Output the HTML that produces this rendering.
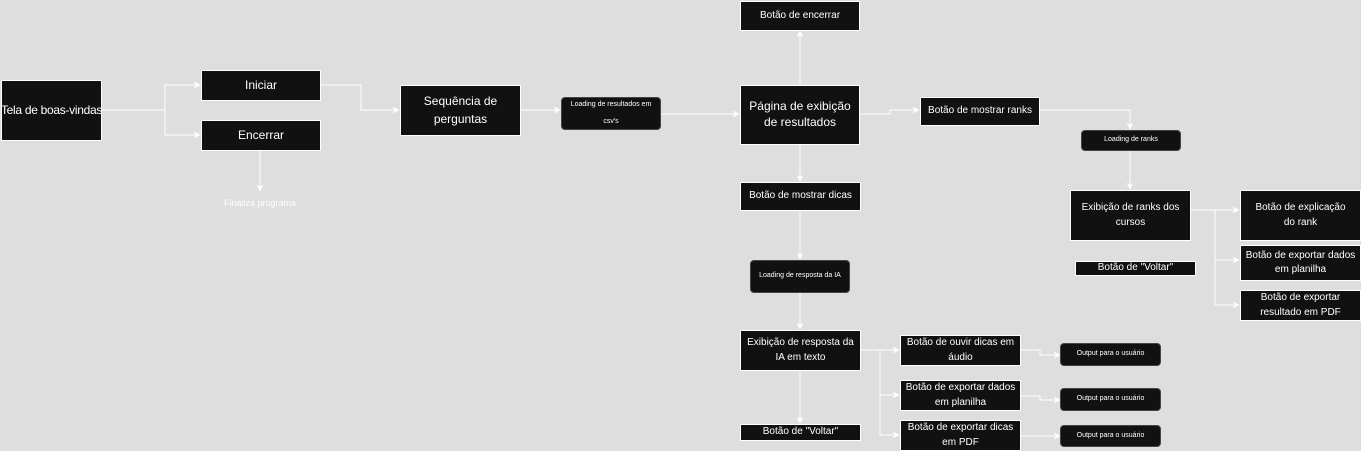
<!DOCTYPE html>
<html><head><meta charset="utf-8"><style>
body{margin:0;width:1361px;height:451px;background:#dedede;position:relative;overflow:hidden;font-family:"Liberation Sans",sans-serif}
.b{position:absolute;background:#111;border:1px solid #fff;box-sizing:border-box;color:#fff;display:flex;align-items:center;justify-content:center;text-align:center;font-size:10px;line-height:1.45}
.r{border-radius:4px;font-size:7px;border-color:#444}
svg{position:absolute;left:0;top:0}
</style></head><body>
<svg width="1361" height="451" fill="none" stroke="#fff" stroke-width="1">
<defs><marker id="a" viewBox="0 0 10 10" refX="9" refY="5" markerWidth="7" markerHeight="7" orient="auto"><path d="M0 0L10 5L0 10L3 5z" fill="#fff" stroke="none"/></marker></defs>
<path d="M101 110H165V85H200" marker-end="url(#a)"/>
<path d="M165 110V135H200" marker-end="url(#a)"/>
<path d="M260 150V191" marker-end="url(#a)"/>
<path d="M320 85H361V110H399" marker-end="url(#a)"/>
<path d="M520 110H560" marker-end="url(#a)"/>
<path d="M661 114H739" marker-end="url(#a)"/>
<path d="M800 85V31" marker-end="url(#a)"/>
<path d="M860 114H890V110H919" marker-end="url(#a)"/>
<path d="M1040 110H1130V129" marker-end="url(#a)"/>
<path d="M1130 151V189" marker-end="url(#a)"/>
<path d="M1190 210H1239" marker-end="url(#a)"/>
<path d="M1215 210V260H1239" marker-end="url(#a)"/>
<path d="M1215 260V305H1239" marker-end="url(#a)"/>
<path d="M800 145V181" marker-end="url(#a)"/>
<path d="M800 210V259" marker-end="url(#a)"/>
<path d="M800 293V329" marker-end="url(#a)"/>
<path d="M800 370V423" marker-end="url(#a)"/>
<path d="M860 350H899" marker-end="url(#a)"/>
<path d="M880 350V395H899" marker-end="url(#a)"/>
<path d="M880 395V435H899" marker-end="url(#a)"/>
<path d="M1020 350H1040V355H1060" marker-end="url(#a)"/>
<path d="M1020 396H1040V400H1060" marker-end="url(#a)"/>
<path d="M1020 436H1060" marker-end="url(#a)"/>
</svg>
<div class="b" style="left:1px;top:80px;width:101px;height:61px;font-size:12px;white-space:nowrap;letter-spacing:-0.3px">Tela de boas-vindas</div>
<div class="b" style="left:201px;top:70px;width:120px;height:31px;font-size:12px">Iniciar</div>
<div class="b" style="left:201px;top:120px;width:120px;height:31px;font-size:12px">Encerrar</div>
<div style="position:absolute;left:205px;top:198px;width:110px;text-align:center;color:#fff;font-size:9px">Finaliza programa</div>
<div class="b" style="left:400px;top:85px;width:121px;height:51px;font-size:12px">Sequência de<br>perguntas</div>
<div class="b r" style="left:561px;top:97px;width:100px;height:33px;line-height:2.4">Loading de resultados em<br>csv's</div>
<div class="b" style="left:740px;top:1px;width:120px;height:30px">Botão de encerrar</div>
<div class="b" style="left:740px;top:85px;width:120px;height:60px;font-size:12px;line-height:1.3">Página de exibição<br>de resultados</div>
<div class="b" style="left:920px;top:97px;width:120px;height:29px">Botão de mostrar ranks</div>
<div class="b r" style="left:1081px;top:130px;width:100px;height:21px">Loading de ranks</div>
<div class="b" style="left:1070px;top:190px;width:121px;height:51px">Exibição de ranks dos<br>cursos</div>
<div class="b" style="left:1240px;top:190px;width:121px;height:51px">Botão de explicação<br>do rank</div>
<div class="b" style="left:1240px;top:245px;width:121px;height:36px">Botão de exportar dados<br>em planilha</div>
<div class="b" style="left:1240px;top:290px;width:121px;height:31px">Botão de exportar<br>resultado em PDF</div>
<div class="b" style="left:1075px;top:261px;width:121px;height:15px">Botão de "Voltar"</div>
<div class="b" style="left:740px;top:182px;width:121px;height:29px">Botão de mostrar dicas</div>
<div class="b r" style="left:750px;top:260px;width:100px;height:33px">Loading de resposta da IA</div>
<div class="b" style="left:740px;top:330px;width:121px;height:41px">Exibição de resposta da<br>IA em texto</div>
<div class="b" style="left:740px;top:424px;width:121px;height:17px">Botão de "Voltar"</div>
<div class="b" style="left:900px;top:335px;width:121px;height:31px">Botão de ouvir dicas em<br>áudio</div>
<div class="b" style="left:900px;top:380px;width:121px;height:31px">Botão de exportar dados<br>em planilha</div>
<div class="b" style="left:900px;top:420px;width:121px;height:31px">Botão de exportar dicas<br>em PDF</div>
<div class="b r" style="left:1060px;top:343px;width:101px;height:23px">Output para o usuário</div>
<div class="b r" style="left:1060px;top:388px;width:101px;height:23px">Output para o usuário</div>
<div class="b r" style="left:1060px;top:425px;width:101px;height:22px">Output para o usuário</div>
</body></html>
